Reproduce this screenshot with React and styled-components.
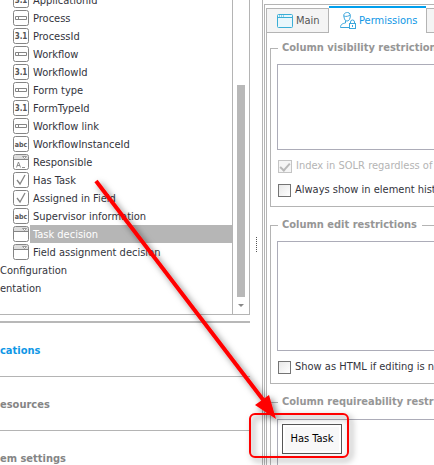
import React from "react";
import styled, { createGlobalStyle } from "styled-components";

const line = "#b4b4b4";
const blue = "#0f97e6";

const GlobalStyle = createGlobalStyle`
  * { box-sizing: border-box; }
  html, body, #root { height: 100%; margin: 0; }
  body {
    background: #fff;
    color: #33343c;
    font-family: "DejaVu Sans Condensed", "Noto Sans", sans-serif;
    font-size: 11px;
    line-height: 18px;
    overflow: hidden;
  }
  button, input, textarea { font: inherit; color: inherit; margin: 0; }
`;

const Window = styled.div`
  display: flex;
  height: 100vh;
  overflow: hidden;
  position: relative;
  white-space: nowrap;
`;

const Sidebar = styled.aside`
  flex: 0 0 250px;
  display: flex;
  flex-direction: column;
`;

const TreePane = styled.section`
  display: flex;
  flex: 0 0 315px;
  overflow: hidden;
  border: solid ${line};
  border-width: 0 1px 1px 0;
`;

const Tree = styled.ul`
  flex: 1;
  list-style: none;
  margin: -9px 0 0;
  padding: 0;
`;

const TreeRow = styled.li`
  display: flex;
  align-items: center;
  height: 18px;
  padding-left: ${(p) => (p.$parent ? 0 : 13)}px;
`;

const RowLabel = styled.span`
  flex: 1;
  height: 18px;
  line-height: 20px;
  margin-left: ${(p) => (p.$parent ? 0 : 1)}px;
  padding-left: ${(p) => (p.$parent ? 0 : 3)}px;
  color: ${(p) => (p.$selected ? "#fff" : "inherit")};
  background: ${(p) => (p.$selected ? "#b6b6b6" : "transparent")};
`;

const ScrollTrack = styled.div`
  flex: 0 0 17px;
  display: flex;
  flex-direction: column;
  align-items: center;
  border-left: 1px solid ${line};
  padding-top: 85px;
`;

const ScrollThumb = styled.div`
  width: 8px;
  height: 212px;
  background: #b8b8b8;
`;

const ScrollArrow = styled.svg`
  margin-top: 7px;
`;

const Nav = styled.nav`
  margin-top: 6px;
  border-top: 2px solid #b8b8b8;
`;

const NavLink = styled.a`
  display: flex;
  align-items: center;
  height: 54px;
  padding-top: 2px;
  border-bottom: 1px solid ${line};
  color: ${(p) => (p.$active ? blue : "#858585")};
  font-weight: bold;
  text-decoration: none;
`;

const Splitter = styled.div`
  flex: 0 0 12px;
  display: flex;
  justify-content: center;
  padding-top: 237px;
`;

const Grip = styled.div`
  width: 1px;
  height: 16px;
  background: repeating-linear-gradient(#555 0 1px, transparent 1px 2px);
`;

const Detail = styled.main`
  flex: 1;
  min-width: 0;
  border-left: 1px solid ${line};
  padding: 4px 0 0 1px;
`;

const TabFrame = styled.div`
  display: flex;
  flex-direction: column;
  height: 100%;
  border: solid ${line};
  border-width: 1px 0 0 1px;
  padding: 1px 0 0 1px;
`;

const TabBar = styled.div`
  display: flex;
  align-items: flex-end;
  flex: 0 0 27px;
  overflow: hidden;
`;

const Tab = styled.button`
  display: flex;
  align-items: center;
  flex: 0 0 ${(p) => p.$width}px;
  gap: ${(p) => (p.$active ? 2 : 3)}px;
  height: ${(p) => (p.$active ? 27 : 25)}px;
  padding: 0 0 0 ${(p) => (p.$active ? 11 : 10)}px;
  border: solid ${line};
  border-width: ${(p) => (p.$active ? "2px 0 0" : "1px")};
  border-top-color: ${(p) => (p.$active ? "#009fee" : line)};
  background: ${(p) => (p.$active ? "#fff" : "#f4f4f4")};
  color: ${(p) => (p.$active ? blue : "#555")};
`;

const TabBody = styled.div`
  display: flex;
  flex-direction: column;
  flex: 1;
  gap: 9px;
  min-height: 0;
  overflow: hidden;
  border-left: 1px solid ${line};
  padding: 6px 0 0 3px;
`;

const Group = styled.fieldset`
  flex: none;
  min-width: 0;
  margin: 0;
  padding: 0 0 7px 6px;
  border: 1px solid ${line};
  border-right: 0;
`;

const Legend = styled.legend`
  height: 18px;
  margin-left: 1px;
  padding: 0 5px 0 4px;
  color: #969696;
  font-weight: bold;
`;

const Box = styled.textarea`
  display: block;
  width: 100%;
  height: ${(p) => p.$height}px;
  margin-top: 7px;
  border: 1px solid #acacb8;
  border-right: 0;
  background: #fff;
  resize: none;
  outline: 0;
`;

const Zone = styled.div`
  height: 90px;
  margin-top: 8px;
  padding: 4px;
  border: 1px solid #acacb8;
  border-right: 0;
`;

const CheckList = styled.div`
  display: flex;
  flex-direction: column;
  gap: 6px;
  margin-top: 7px;
`;

const CheckLabel = styled.label`
  display: flex;
  align-items: center;
  gap: 4px;
  height: 18px;
  line-height: 20px;
  padding-left: 1px;
  color: ${(p) => (p.$disabled ? "#b4b4b4" : "inherit")};
`;

const Check = styled.input`
  appearance: none;
  flex: 0 0 13px;
  height: 13px;
  border: 1px solid #747474;
  background: linear-gradient(135deg, #e8e8e8, #fff);
  &:disabled { border-color: #c4c4c4; }
  &:checked { background: #f5f5f5; }
  &:checked::after {
    content: "";
    display: block;
    width: 8px;
    height: 4px;
    margin: 2px 1px;
    border: solid #b8b8b8;
    border-width: 0 0 2px 2px;
    transform: rotate(-48deg);
  }
`;

const TaskButton = styled.button`
  width: 60px;
  height: 30px;
  padding: 0;
  border: 1px solid #555;
  background: #f8f8f8;
  box-shadow: inset 0 0 0 2px #fff;
  color: #000;
`;

const Annotation = styled.svg`
  position: absolute;
  top: 0;
  left: 0;
  pointer-events: none;
`;

const IconText = styled.text`
  font-family: "DejaVu Sans Condensed", sans-serif;
  font-weight: bold;
  font-size: ${(p) => p.$size}px;
  fill: #555;
`;

function TypeIcon({ kind }) {
  const hasHeader = kind === "user" || kind === "choice";
  return (
    <svg width="16" height="16" viewBox="0 0 16 16" fill="none" stroke="#858585" aria-hidden="true">
      {hasHeader && <path d="M1 5V3Q1 1 3 1H13Q15 1 15 3V5Z" fill="#ddd" stroke="none" />}
      <rect x=".5" y=".5" width="15" height="15" rx="2" />
      {kind === "text" && <path d="M2.5 6.5h11v3h-11zM5.5 6.5v3" />}
      {kind === "number" && <IconText $size={8} x="8" y="11" textAnchor="middle" stroke="none">3.1</IconText>}
      {kind === "abc" && <IconText $size={7} x="8" y="11" textAnchor="middle" stroke="none">abc</IconText>}
      {kind === "check" && <path d="M4 8l3 4 5-9" strokeWidth="1.3" />}
      {hasHeader && (
        <>
          <path d="M0 5.5h16" />
          <path d="M9.5 2.5h4L11.5 4.5z" fill="#fff" strokeWidth=".8" />
        </>
      )}
      {kind === "user" && <path d="M3.5 13.5L5.5 8l2 5.5M4 11.5h3M9 13.5h3" strokeWidth=".9" />}
    </svg>
  );
}

const WindowIcon = () => (
  <svg width="16" height="14" viewBox="0 0 16 14" fill="#e9f7fc" stroke="#3baed6" aria-hidden="true">
    <rect x=".5" y=".5" width="15" height="13" rx="1" />
    <path d="M1 3.5h14" />
    <path d="M2 2h1M4 2h1M6 2h1" />
  </svg>
);

const UserLockIcon = () => (
  <svg width="17" height="17" viewBox="0 0 17 17" fill="none" stroke="#3ba6dc" aria-hidden="true">
    <path d="M4 5C3 2 5 .5 7.5 .5S11 3 10 6C9.5 8 8.5 9 7 9S4.5 8 4 5ZM4 4c2 1 5 0 6-1M5.5 9v2C3 11.5 .5 12 .5 15.5H9" />
    <path d="M10.5 11V10q0-2 2-2t2 2v1" />
    <rect x="9.5" y="11.5" width="6" height="5" fill="#fff" />
    <path d="M12.5 13v2" />
  </svg>
);

const rows = [
  ["number", "ApplicationId"],
  ["text", "Process"],
  ["number", "ProcessId"],
  ["text", "Workflow"],
  ["number", "WorkflowId"],
  ["text", "Form type"],
  ["number", "FormTypeId"],
  ["text", "Workflow link"],
  ["abc", "WorkflowInstanceId"],
  ["user", "Responsible"],
  ["check", "Has Task"],
  ["check", "Assigned in Field"],
  ["abc", "Supervisor information"],
  ["choice", "Task decision"],
  ["choice", "Field assignment decision"],
  [null, "Configuration"],
  [null, "entation"],
];

export default function App() {
  return (
    <Window>
      <GlobalStyle />
      <Sidebar>
        <TreePane>
          <Tree>
            {rows.map(([kind, label]) => (
              <TreeRow key={label} $parent={!kind}>
                {kind && <TypeIcon kind={kind} />}
                <RowLabel $parent={!kind} $selected={label === "Task decision"}>{label}</RowLabel>
              </TreeRow>
            ))}
          </Tree>
          <ScrollTrack>
            <ScrollThumb />
            <ScrollArrow width="6" height="3" viewBox="0 0 6 3"><path d="M0 0h6L3 3z" fill="#888" /></ScrollArrow>
          </ScrollTrack>
        </TreePane>
        <Nav>
          <NavLink href="#applications" $active>cations</NavLink>
          <NavLink href="#resources">esources</NavLink>
          <NavLink href="#settings">em settings</NavLink>
        </Nav>
      </Sidebar>
      <Splitter><Grip /></Splitter>
      <Detail>
        <TabFrame>
          <TabBar role="tablist">
            <Tab role="tab" $width={63}><WindowIcon />Main</Tab>
            <Tab role="tab" aria-selected="true" $active $width={97}><UserLockIcon />Permissions</Tab>
            <Tab role="tab" aria-label="More" $width={60} />
          </TabBar>
          <TabBody>
            <Group>
              <Legend>Column visibility restrictions</Legend>
              <Box $height={86} aria-label="Column visibility restrictions" />
              <CheckList>
                <CheckLabel $disabled><Check type="checkbox" defaultChecked disabled />Index in SOLR regardless of visibility</CheckLabel>
                <CheckLabel><Check type="checkbox" />Always show in element history</CheckLabel>
              </CheckList>
            </Group>
            <Group>
              <Legend>Column edit restrictions</Legend>
              <Box $height={110} aria-label="Column edit restrictions" />
              <CheckList>
                <CheckLabel><Check type="checkbox" />Show as HTML if editing is not allowed</CheckLabel>
              </CheckList>
            </Group>
            <Group>
              <Legend>Column requireability restrictions</Legend>
              <Zone><TaskButton>Has Task</TaskButton></Zone>
            </Group>
          </TabBody>
        </TabFrame>
      </Detail>
      <Annotation width="434" height="465" viewBox="0 0 434 465" aria-hidden="true">
        <defs>
          <filter id="shadow" x="-10%" y="-10%" width="125%" height="125%">
            <feDropShadow dx="3" dy="3" stdDeviation="3" floodColor="#000" floodOpacity=".5" />
          </filter>
        </defs>
        <g filter="url(#shadow)">
          <path d="M96 181L264 401" stroke="#f00" strokeWidth="4" />
          <path d="M276 419L255 405L269 395Z" fill="#f00" />
          <rect x="250" y="414" width="98" height="43" rx="5" fill="none" stroke="#f00" strokeWidth="2" />
        </g>
      </Annotation>
    </Window>
  );
}
